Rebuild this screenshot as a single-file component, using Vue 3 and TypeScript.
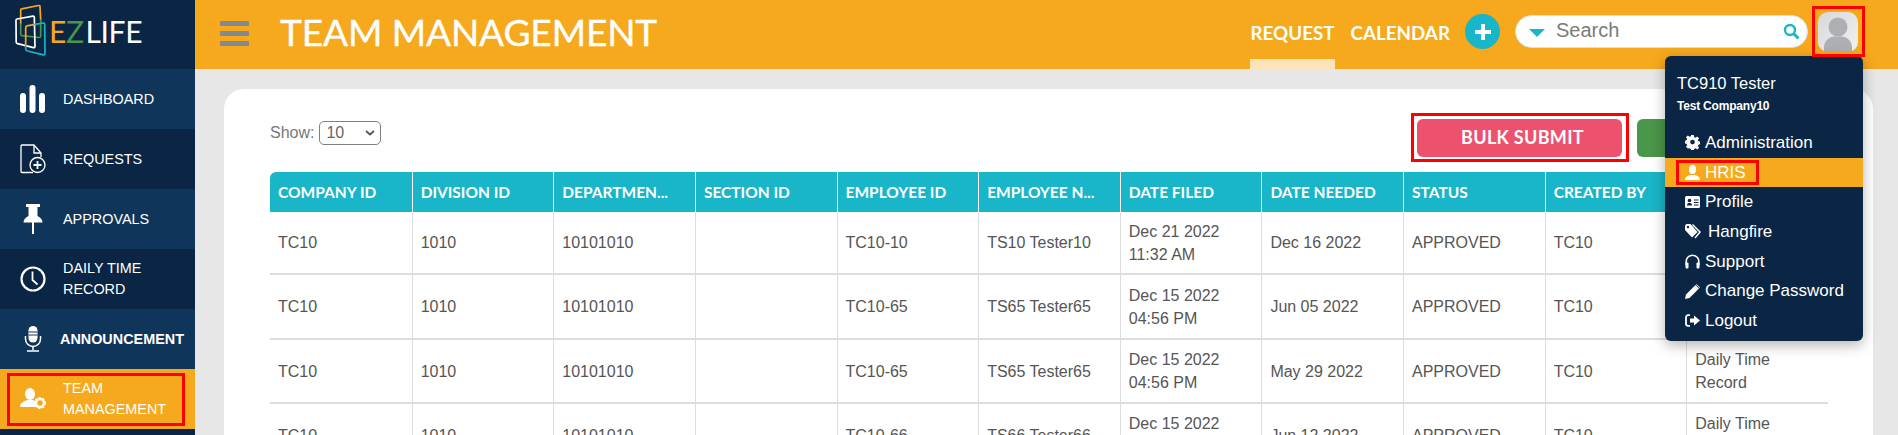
<script setup lang="ts">
interface Row { c: string; d: string; dep: string; emp: string; name: string; filed: string[]; needed: string; last: string[] }
const heads = ['COMPANY ID','DIVISION ID','DEPARTMEN...','SECTION ID','EMPLOYEE ID','EMPLOYEE N...','DATE FILED','DATE NEEDED','STATUS','CREATED BY','REQUEST TYPE']
const rows: Row[] = [
  { c:'TC10', d:'1010', dep:'10101010', emp:'TC10-10', name:'TS10 Tester10', filed:['Dec 21 2022','11:32 AM'], needed:'Dec 16 2022', last:[] },
  { c:'TC10', d:'1010', dep:'10101010', emp:'TC10-65', name:'TS65 Tester65', filed:['Dec 15 2022','04:56 PM'], needed:'Jun 05 2022', last:[] },
  { c:'TC10', d:'1010', dep:'10101010', emp:'TC10-65', name:'TS65 Tester65', filed:['Dec 15 2022','04:56 PM'], needed:'May 29 2022', last:['Daily Time','Record'] },
  { c:'TC10', d:'1010', dep:'10101010', emp:'TC10-66', name:'TS66 Tester66', filed:['Dec 15 2022','04:56 PM'], needed:'Jun 12 2022', last:['Daily Time','Record'] },
]
</script>

<template>
  <div class="page">
    <aside class="side">
      <div class="logo">
        <svg class="logo-mark" width="50" height="60" viewBox="0 0 50 60" fill="none" stroke-width="1.700" stroke-linejoin="round" stroke-linecap="round">
          <path d="M20.700 24V10Q20.700 9 21.700 8.900L38.500 5.500Q40 5.300 40 6.800L40.700 20" stroke="#f6a91c"/>
          <path d="M20.700 24V34Q20.700 35.500 22 35.700L39 37.500Q40.700 37.500 40.700 36L40.700 20" stroke="#4a964a"/>
          <path d="M16 20.500Q16 19.200 17 19L33 16.200Q34.300 16 34.300 17.200L35 46.200Q35 47.800 33.500 47.600L17.500 43.700Q16.200 43.300 16.200 42Z" stroke="#ffffff"/>
          <path d="M25.700 46V27.500Q25.700 26 27 25.800L35 24.300" stroke="#f6a91c"/>
          <path d="M35 24.300L43.500 23Q44.700 23 44.700 24.200L45 53.500Q45 55 43.500 54.800L27.500 51Q25.700 50.500 25.700 49V46" stroke="#19b5c9"/>
        </svg>
        <div class="logo-text"><span class="ez-e">E</span><span class="ez-z">Z</span><span class="ez-l">LIFE</span></div>
      </div>
      <div class="item alt">
        <svg class="ico" width="26" height="28" viewBox="0 0 26 28" fill="#fff"><rect x="0" y="8" width="6" height="20" rx="3"/><rect x="9.500" y="0" width="6" height="28" rx="3"/><rect x="19" y="8" width="6" height="20" rx="3"/></svg>
        <span>DASHBOARD</span>
      </div>
      <div class="item">
        <svg class="ico" width="26" height="30" viewBox="0 0 26 30" fill="none" stroke="#fff" stroke-width="1.300"><path d="M13 28.500H2a1 1 0 0 1-1-1V2a1 1 0 0 1 1-1h12l7 8v4"/><path d="M14 1v8h7"/><circle cx="17.500" cy="21" r="7.500"/><path d="M17.500 17v8M13.500 21h8" stroke-width="1.800"/></svg>
        <span>REQUESTS</span>
      </div>
      <div class="item alt">
        <svg class="ico" width="26" height="30" viewBox="0 0 26 30" fill="#fff"><path d="M6 0h14v3h-2.500v9c3 1.500 5 3.500 5 6.500H3.500c0-3 2-5 5-6.500V3H6z"/><rect x="12" y="18" width="2" height="12"/></svg>
        <span>APPROVALS</span>
      </div>
      <div class="item">
        <svg class="ico" width="26" height="26" viewBox="0 0 26 26" fill="none" stroke="#fff"><circle cx="13" cy="13" r="11.500" stroke-width="2.200"/><path d="M12.500 5.500V14l5 4.500" stroke-width="1.800"/></svg>
        <span>DAILY TIME<br>RECORD</span>
      </div>
      <div class="item alt ann">
        <svg class="ico" width="26" height="26" viewBox="0 0 26 26" fill="none" stroke="#fff" stroke-width="1.200"><rect x="8.500" y="0" width="9" height="16.500" rx="4.500" fill="#fff" stroke="none"/><path d="M8.500 6h9M8.500 9h9" stroke="#10355a"/><path d="M5.500 10v3a7.500 7.500 0 0 0 15 0v-3" stroke-width="1.500"/><path d="M13 20.500V24M7 25h12" stroke-width="1.500"/></svg>
        <span>ANNOUNCEMENT</span>
      </div>
      <div class="item on">
        <svg class="ico" width="26" height="22" viewBox="0 0 26 22" fill="#fff"><ellipse cx="10" cy="6" rx="5" ry="6"/><path d="M0 19c0-4 4-6 7-7h6c1.500.5 2 1 3 1.500-.5 2-.5 4 .5 5.500z"/><circle cx="20" cy="15" r="4" fill="none" stroke="#fff" stroke-width="2.500"/><circle cx="20" cy="15" r="5.500" fill="none" stroke="#fff" stroke-width="1.200" stroke-dasharray="2 2"/></svg>
        <span>TEAM<br>MANAGEMENT</span>
        <i class="mark team-mark"></i>
      </div>
      <div class="item"></div>
    </aside>

    <main class="main">
      <header class="top">
        <div class="burger"><i></i><i></i><i></i></div>
        <h1>TEAM MANAGEMENT</h1>
        <nav class="nav">
          <a class="active">REQUEST</a>
          <a>CALENDAR</a>
        </nav>
        <div class="plus">
          <svg width="16" height="16" viewBox="0 0 16 16" fill="#fff"><path d="M6 0h4v6h6v4h-6v6H6v-6H0V6h6z"/></svg>
        </div>
        <div class="search">
          <i class="caret"></i>
          <span class="ph">Search</span>
          <svg class="mag" width="17" height="17" viewBox="0 0 17 17" fill="none" stroke="#19b5c9"><circle cx="7" cy="7" r="5" stroke-width="2.400"/><path d="M11 11l4.500 4.500" stroke-width="3"/></svg>
        </div>
        <div class="avatar">
          <svg width="40" height="40" viewBox="0 0 40 40"><defs><linearGradient id="av" x1="0" y1="0" x2="1" y2="1"><stop offset="0" stop-color="#d6d7da"/><stop offset="1" stop-color="#f2f2f2"/></linearGradient></defs><rect width="40" height="40" rx="10" fill="url(#av)"/><circle cx="20" cy="15" r="9.500" fill="#aeafb5"/><path d="M6 40v-5c0-6 5-10 10-10.500h8c5 .5 10 4.500 10 10.500v5z" fill="#aeafb5"/></svg>
          <i class="mark avatar-mark"></i>
        </div>
      </header>

      <section class="content">
        <div class="card">
          <div class="tools">
            <label class="show">Show:
              <span class="sel">10<svg width="10" height="6" viewBox="0 0 10 6" fill="none" stroke="#555" stroke-width="1.800"><path d="M1 1l4 3.500L9 1"/></svg></span>
            </label>
            <div class="btns">
              <button class="bulk">BULK SUBMIT<i class="mark bulk-mark"></i></button>
              <button class="green"></button>
            </div>
          </div>
          <table class="grid">
            <thead><tr><th v-for="h in heads" :key="h">{{ h }}</th></tr></thead>
            <tbody>
              <tr v-for="(r, i) in rows" :key="i">
                <td>{{ r.c }}</td>
                <td>{{ r.d }}</td>
                <td>{{ r.dep }}</td>
                <td></td>
                <td>{{ r.emp }}</td>
                <td>{{ r.name }}</td>
                <td>{{ r.filed[0] }}<br>{{ r.filed[1] }}</td>
                <td>{{ r.needed }}</td>
                <td>APPROVED</td>
                <td>TC10</td>
                <td><template v-if="r.last.length">{{ r.last[0] }}<br>{{ r.last[1] }}</template></td>
              </tr>
            </tbody>
          </table>
        </div>
      </section>

      <div class="menu">
        <div class="who">TC910 Tester</div>
        <div class="co">Test Company10</div>
        <ul>
          <li>
            <svg width="15" height="15" viewBox="0 0 16 16" fill="#fff"><path d="M6.600 0h2.800l.4 2.200 1.400.6L13 1.500l2 2-1.300 1.800.6 1.400 2.200.4v2.800l-2.200.4-.6 1.400 1.300 1.800-2 2-1.800-1.300-1.400.6-.4 2.200H6.600l-.4-2.200-1.400-.6L3 14.500l-2-2 1.300-1.800-.6-1.400L-.5 8.900V6.100l2.200-.4.6-1.400L1 2.500l2-2 1.800 1.300 1.400-.6z"/><circle cx="8" cy="7.500" r="2.500" fill="#0a2644"/></svg>
            Administration
          </li>
          <li class="hl">
            <svg width="15" height="15" viewBox="0 0 15 15" fill="#fff"><ellipse cx="7.500" cy="4.500" rx="3.500" ry="4.500"/><path d="M0 15c0-3 2-4 5-5h5c3 1 5 2 5 5z"/></svg>
            HRIS
            <i class="mark hris-mark"></i>
          </li>
          <li>
            <svg width="15" height="12" viewBox="0 0 15 12"><rect width="15" height="12" rx="1.500" fill="#fff"/><circle cx="4.500" cy="4.500" r="1.800" fill="#0a2644"/><path d="M2 9.500c0-2 1-2.500 2.500-2.500S7 7.500 7 9.500z" fill="#0a2644"/><path d="M9 4h4.500M9 6.500h4.500M9 9h4.500" stroke="#0a2644" stroke-width="1.200"/></svg>
            Profile
          </li>
          <li class="wide">
            <svg width="17" height="15" viewBox="0 0 17 15" fill="#fff"><path d="M0 1.500V6l7 7.500L12.500 8 5.500 0H1.500z"/><circle cx="3" cy="3" r="1.200" fill="#0a2644"/><path d="M8 0l8 8-5.500 6.500-1-1L14 8 7 1z"/></svg>
            Hangfire
          </li>
          <li>
            <svg width="15" height="15" viewBox="0 0 15 15" fill="none" stroke="#fff" stroke-width="1.600"><path d="M1.200 11V7.500a6.300 6.300 0 0 1 12.600 0V11"/><rect x="0.500" y="8.500" width="3" height="6" rx="1" fill="#fff" stroke="none"/><rect x="11.500" y="8.500" width="3" height="6" rx="1" fill="#fff" stroke="none"/></svg>
            Support
          </li>
          <li>
            <svg width="15" height="15" viewBox="0 0 15 15" fill="#fff"><path d="M0 15l1-4.500L10.500 1l3.500 3.500L4.500 14z"/><path d="M11.500 0l3.500 3.500-.5.500L11 .5z"/></svg>
            Change Password
          </li>
          <li>
            <svg width="15" height="13" viewBox="0 0 15 13" fill="none"><path d="M5 1.200H3a2 2 0 0 0-2 2v6.600a2 2 0 0 0 2 2h2" stroke="#fff" stroke-width="1.800"/><path d="M5 4.500h4V1.500L15 6.500l-6 5v-3H5z" fill="#fff"/></svg>
            Logout
          </li>
        </ul>
      </div>
    </main>
  </div>
</template>

<style>
html, body { margin: 0; padding: 0; background: #e7e7e7; overflow: hidden; }
</style>

<style scoped>
.page { display: flex; width: 1898px; height: 435px; overflow: hidden; font-family: "Liberation Sans", Arial, sans-serif; }
.mark { position: absolute; border: 3px solid #ff0000; box-sizing: border-box; pointer-events: none; }

.side { width: 195px; flex: none; background: #0a2644; display: flex; flex-direction: column; }
.logo { height: 69px; flex: none; position: relative; display: flex; align-items: center; padding-left: 49px; box-sizing: border-box; }
.logo-mark { position: absolute; left: 0; top: 0; }
.logo-text { font-family: Lato, sans-serif; font-size: 30px; line-height: 1; letter-spacing: -0.4px; margin-top: -7px; font-weight: 400; }
.ez-e { color: #f6a91c; }
.ez-z { color: #4a964a; margin-right: 2px; }
.ez-l { color: #fff; }
.item { height: 60px; flex: none; display: flex; align-items: center; color: #fff; font-size: 14.4px; line-height: 21px; padding-left: 20px; box-sizing: border-box; position: relative; }
.item .ico { flex: none; margin-right: 17px; }
.item.alt { background: #10355a; }
.item.ann .ico { margin-right: 14px; }
.item.ann span { font-weight: 700; letter-spacing: 0; }
.item.on { background: #f6a91c; }
.team-mark { left: 7px; top: 4px; width: 178px; height: 53px; }

.main { flex: 1; min-width: 0; display: flex; flex-direction: column; position: relative; }
.top { height: 69px; flex: none; background: #f6a91c; display: flex; align-items: flex-start; position: relative; }
.burger { width: 29px; margin: 21px 0 0 25px; display: flex; flex-direction: column; gap: 5px; flex: none; }
.burger i { display: block; height: 5px; background: #83898e; border-radius: 1px; }
h1 { margin: 13px 0 0 31px; font-family: Lato, sans-serif; font-size: 37px; line-height: 37px; font-weight: 400; -webkit-text-stroke: 0.4px #fff; color: #fff; letter-spacing: -0.08px; white-space: nowrap; flex: none; }
.nav { display: flex; gap: 16px; margin-left: auto; height: 69px; flex: none; }
.nav a { color: #fff; font-family: Lato, sans-serif; font-weight: 700; font-size: 18.8px; line-height: 18px; padding-top: 24px; box-sizing: border-box; height: 69px; }
.nav a.active { border-bottom: 10px solid #fde3b5; }
.plus { width: 35px; height: 35px; border-radius: 50%; background: #19b5c9; margin: 14px 0 0 15px; display: flex; align-items: center; justify-content: center; flex: none; }
.search { width: 293px; height: 33px; margin: 15px 0 0 15px; background: #fff; border: 1px solid #e0e0e0; border-radius: 17px; box-sizing: border-box; display: flex; align-items: center; padding: 0 7px 0 13px; flex: none; }
.caret { width: 0; height: 0; border-left: 8px solid transparent; border-right: 8px solid transparent; border-top: 8px solid #19b5c9; margin-right: 11px; margin-top: 3px; }
.ph { color: #7b7b7b; font-size: 20px; margin-top: -2px; }
.mag { margin-left: auto; }
.avatar { width: 40px; height: 40px; margin: 12px 40px 0 10px; flex: none; position: relative; }
.avatar svg { display: block; }
.avatar-mark { left: -6px; top: -6px; width: 53px; height: 51px; z-index: 6; }

.content { flex: 1; min-height: 0; background: #e7e7e7; padding: 20px 25px 0 29px; }
.card { background: #fff; border-radius: 20px 20px 0 0; height: 100%; padding: 32px 0 0 46px; box-sizing: border-box; overflow: hidden; }
.tools { display: flex; justify-content: space-between; height: 51px; padding-right: 36px; }
.show { color: #777; font-size: 16px; display: flex; gap: 5px; height: 24px; line-height: 24px; }
.sel { width: 62px; height: 24px; border: 1px solid #808080; border-radius: 5px; box-sizing: border-box; line-height: 22px; padding-left: 6px; color: #666; display: flex; align-items: center; justify-content: space-between; padding-right: 5px; }
.btns { display: flex; gap: 15px; margin-top: -2px; }
button { border: 0; height: 38px; border-radius: 6px; padding: 0; color: #fff; font-family: Lato, sans-serif; font-weight: 700; font-size: 18px; }
.bulk { width: 205px; background: #ec526d; position: relative; letter-spacing: 0.3px; flex: none; padding: 0 0 2px 6px; }
.bulk-mark { left: -6px; top: -6px; width: 218px; height: 49px; }
.green { width: 200px; background: #4a964a; flex: none; }
.grid { border-collapse: separate; border-spacing: 0; width: 1558px; table-layout: fixed; color: #555; font-size: 16px; }
.grid th { height: 40px; background: #19b5c9; color: #fff; text-align: left; padding: 0 0 0 8px; box-sizing: border-box; font-family: Lato, sans-serif; font-weight: 700; font-size: 15.500px; white-space: nowrap; overflow: hidden; border-left: 1px solid #fff; }
.grid th:first-child { border-left: 0; border-top-left-radius: 6px; }
.grid td { height: 64px; padding: 0 0 0 8px; box-sizing: border-box; line-height: 23px; border-left: 1px solid #ddd; border-bottom: 2px solid #ddd; vertical-align: middle; }
.grid tr:nth-child(1) td { height: 63px; }
.grid tr:nth-child(2) td { height: 65px; }
.grid td:first-child { border-left: 0; }

.menu { position: absolute; left: 1470px; top: 56px; width: 198px; height: 285px; background: #0a2644; border-radius: 6px; color: #fff; box-shadow: 0 4px 14px rgba(0,0,0,.3); box-sizing: border-box; padding-top: 17px; z-index: 5; }
.who { font-size: 16.5px; line-height: 20px; padding-left: 12px; }
.co { font-size: 12px; font-weight: 700; line-height: 14px; margin-top: 6px; padding-left: 12px; letter-spacing: -0.2px; }
ul { list-style: none; margin: 15px 0 0; padding: 0; }
li { height: 29.700px; display: flex; align-items: center; font-size: 17px; padding-left: 20px; position: relative; gap: 5px; white-space: nowrap; }
li svg { flex: none; }
li.hl { background: #f6a91c; }
li.wide { gap: 6px; }
.hris-mark { left: 11px; top: 2px; width: 83px; height: 25px; }
</style>
